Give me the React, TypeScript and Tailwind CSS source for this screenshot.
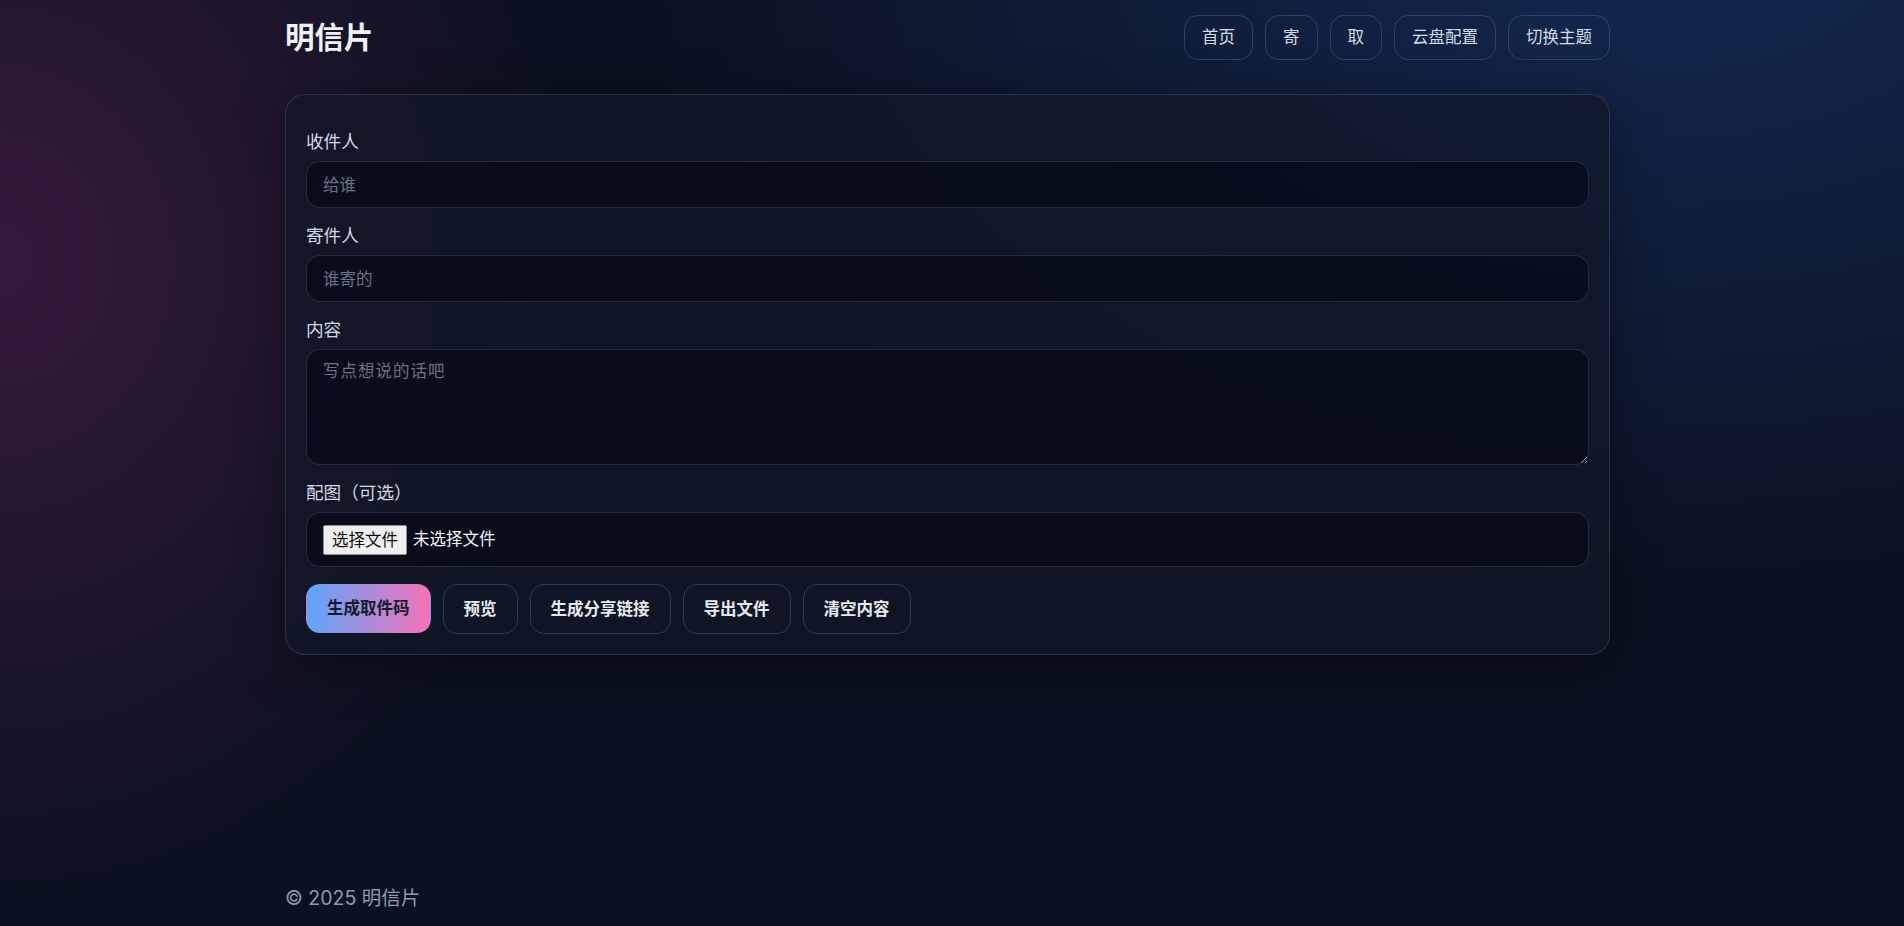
const navItems = ["首页", "寄", "取", "云盘配置", "切换主题"];
const actions = ["预览", "生成分享链接", "导出文件", "清空内容"];

const font = "font-['Inter','Noto_Sans_CJK_SC',sans-serif]";

const Field = ({ label, children }: { label: string; children: React.ReactNode }) => (
  <div className="flex flex-col">
    <label className="mb-[6px] block text-[17.6px] leading-[27px] text-[#d3d9e4]">{label}</label>
    {children}
  </div>
);

const inputCls =
  "w-full rounded-[14px] border border-[rgba(148,163,184,0.2)] bg-[rgba(3,6,20,0.6)] px-4 text-[16.5px] text-[#e5e9f0] outline-none placeholder:text-[#6b7383]";

export default function App() {
  return (
    <div
      className={`${font} flex min-h-screen flex-col bg-[#0b1120] bg-[radial-gradient(1500px_950px_at_88%_-8%,rgba(40,90,190,0.32),transparent_70%),radial-gradient(800px_900px_at_0%_28%,rgba(165,50,130,0.28),transparent_72%)] pr-[9px]`}
    >
      <div className="mx-auto flex w-[1325px] flex-1 flex-col">
        <header className="flex items-center justify-between pt-[15px]">
          <h1 className="text-[29.5px] font-bold leading-[45px] text-[#eef2fa]">明信片</h1>
          <nav className="flex gap-3">
            {navItems.map((n) => (
              <button
                key={n}
                className="h-[45px] rounded-[14px] border border-[rgba(148,163,184,0.25)] px-[17px] text-[16.5px] text-[#d5dce8]"
              >
                {n}
              </button>
            ))}
          </nav>
        </header>

        <main className="mt-[34px] flex flex-col gap-[14px] rounded-[20px] border border-[rgba(148,163,184,0.2)] bg-[rgba(16,23,39,0.72)] px-5 pb-5 pt-[33px] shadow-[0_10px_50px_rgba(0,0,0,0.35)]">
          <Field label="收件人">
            <input className={`${inputCls} h-[47px]`} placeholder="给谁" />
          </Field>
          <Field label="寄件人">
            <input className={`${inputCls} h-[47px]`} placeholder="谁寄的" />
          </Field>
          <Field label="内容">
            <textarea
              className={`${inputCls} block h-[116px] py-[9px] tracking-[1px] leading-[24px]`}
              placeholder="写点想说的话吧"
            />
          </Field>
          <Field label="配图（可选）">
            <label className="flex h-[55px] cursor-pointer items-center rounded-[14px] border border-[rgba(148,163,184,0.2)] bg-[rgba(3,6,20,0.6)] px-4 text-[16.5px] text-[#f1f5f9]">
              <input type="file" className="hidden" />
              <span className="mr-[6px] rounded-[2px] border border-[#8f8f8f] bg-[#efefef] px-[8px] py-[2px] leading-[24px] text-[#111]">
                选择文件
              </span>
              <span>未选择文件</span>
            </label>
          </Field>
          <div className="mt-[3px] flex gap-3">
            <button className="h-[49px] rounded-[14px] border border-transparent bg-[linear-gradient(90deg,#60a5fa,#f472b6)] px-5 text-[16.5px] font-bold text-[#161a2e]">
              生成取件码
            </button>
            {actions.map((a) => (
              <button
                key={a}
                className="h-[50px] rounded-[14px] border border-[rgba(148,163,184,0.25)] px-5 text-[16.5px] font-bold text-[#e6ebf2]"
              >
                {a}
              </button>
            ))}
          </div>
        </main>

        <footer className="mt-auto pb-[14px] text-[19.5px] leading-[28px] text-[#8c9ab0]">© 2025 明信片</footer>
      </div>
    </div>
  );
}
